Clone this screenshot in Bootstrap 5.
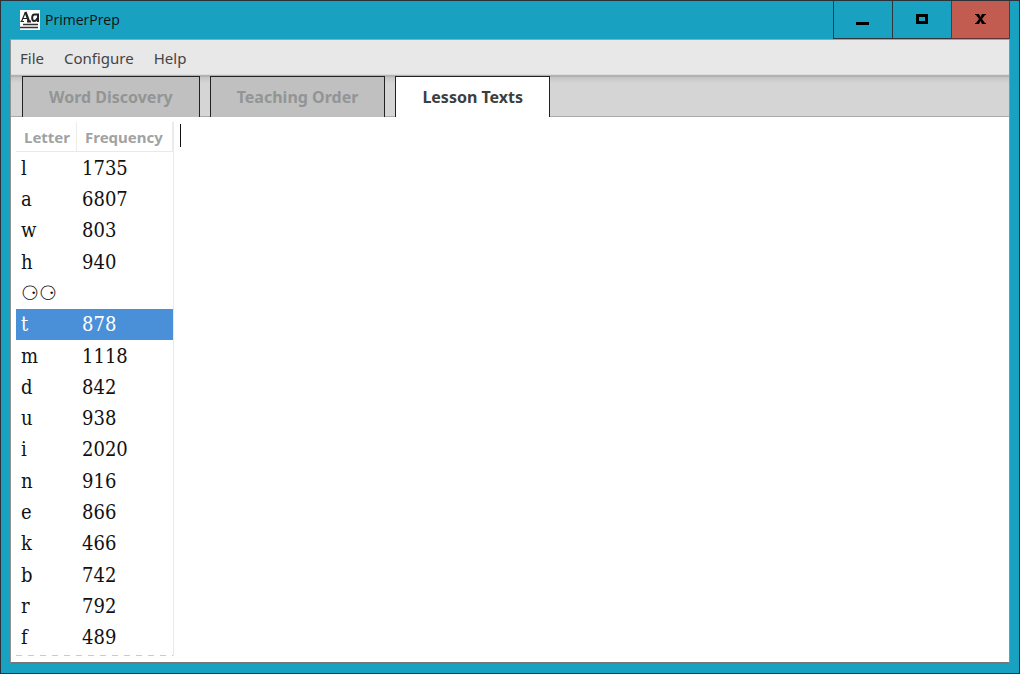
<!DOCTYPE html>
<html lang="en">
<head>
<meta charset="utf-8">
<meta name="viewport" content="width=device-width, initial-scale=1">
<title>PrimerPrep</title>
<link rel="stylesheet" href="https://cdn.jsdelivr.net/npm/bootstrap@5.3.0/dist/css/bootstrap.min.css">
<style>
  body { font-family: "Noto Sans", "Open Sans", sans-serif; font-size: 15px; line-height: 24px; background: #18a1c0; color: #444; }
  .app-window { border: 1px solid #2b3238; padding: 0 9px 9px; }
  .title-bar { height: 38px; color: #111; font-family: "Open Sans", sans-serif; padding-left: 10px; }
  .title-bar h1 { font-size: 14px; line-height: 20px; font-weight: 400; margin-left: 5px; }
  .win-btn { width: 59px; height: 38px; border: 0; border-left: 1px solid #30383d; border-bottom: 1px solid #30383d; background: transparent; }
  .win-close { background: #c25b50; border-color: #603338; border-right: 1px solid #603338; }
  .client { border: 1px solid #929292; border-top-color: #8aa9b8; border-bottom: 2px solid #777; background: #fff; }
  .menu-bar { background: #e8e8e8; height: 35px; padding: 1px 9px 0; gap: 20px; border-bottom: 1px solid #dcdcdc; }
  .menu-bar .nav-link { color: #444; padding: 0; font-size: 15px; }
  .tab-strip { --bs-nav-tabs-border-width: 0; height: 42px; padding: 1px 11px 0; gap: 10px; border-top: 2px solid #b2b2b2; border-bottom: 1px solid #aaa; background: linear-gradient(#c4c4c4, #d5d5d5 6px); }
  .tab-strip .nav-link { height: 41px; margin: -2px 0 -1px; padding: 0 26px; border: 1px solid #222; border-bottom: 0; border-radius: 0; background: #c0c0c0; color: #929595; font-weight: 700; font-size: 16px; }
  .tab-strip .nav-link.active { background: #fff; color: #3b3f42; border-color: #222; }
  .letters { width: 163px; padding: 5px 0 6px 5px; }
  .freq { width: 158px; height: 100%; padding-bottom: 3px; background: repeating-linear-gradient(90deg, #c8ccd0 0 6px, transparent 6px 12px) bottom / 100% 1px no-repeat; border-right: 1px solid #e9e9e9; border-collapse: separate; border-spacing: 0; color: #111; font-family: "DejaVu Serif Condensed", "DejaVu Serif", serif; font-size: 20px; line-height: 24px; table-layout: fixed; }
  .freq th { height: 30px; font: 700 15px/24px "Noto Sans", sans-serif; color: #a0a3a4; padding: 0 8px; border-bottom: 1px solid #e9e9e9; border-right: 1px solid #ececec; }
  .freq th:first-child { width: 61px; }
  .freq td { padding: 0 5px; }
  .freq tr.picked td { background: #4a90d9; color: #fff; }
  .editor { border: 0; padding: 5px 6px; outline: 0; resize: none; font-size: 18px; }
  .caret { left: 6px; top: 7px; width: 1px; height: 23px; background: #111; }
</style>
<script src="https://cdn.jsdelivr.net/npm/bootstrap@5.3.0/dist/js/bootstrap.bundle.min.js"></script>
</head>
<body>
<div class="app-window vh-100 d-flex flex-column">
  <header class="title-bar d-flex align-items-center">
    <svg width="20" height="20" viewBox="0 0 20 20" aria-hidden="true">
      <path fill="#fff" d="M0 0h20v20H0z"/>
      <path fill="none" stroke="#222" stroke-width="1.2" d="M1.500 11.500 5.500 2M3 8.500h5M.5 11.500h3.500"/>
      <path fill="none" stroke="#222" stroke-width="2.200" d="M5.500 2 9 11.500M7 11.500h4"/>
      <path fill="none" stroke="#222" stroke-width="2" d="M18 3.500V12M17.500 4.500h-3C11.500 4.500 11.500 11 14 11c2 0 3-1 3.500-3"/>
      <path fill="none" stroke="#333" stroke-width="1.500" d="M3 14.500h15M0 17.500h18"/>
    </svg>
    <h1 class="mb-0 me-auto">PrimerPrep</h1>
    <div class="d-flex">
      <button type="button" class="win-btn" aria-label="Minimize"><svg width="14" height="14" viewBox="0 0 14 14"><path d="M0 8h13v3H0z"/></svg></button>
      <button type="button" class="win-btn" aria-label="Maximize"><svg width="14" height="14" viewBox="0 0 14 14"><path fill-rule="evenodd" d="M1 0h12v10H1zM4 3v4h6V3z"/></svg></button>
      <button type="button" class="win-btn win-close" aria-label="Close"><svg width="14" height="14" viewBox="0 0 14 14"><path d="M1 0h4l1.500 3L8 0h4v1h-1L8 5l3 4h1v1H8L6.500 7 5 10H1V9h1l3-4-3-4H1z"/></svg></button>
    </div>
  </header>
  <div class="client flex-grow-1 d-flex flex-column">
    <nav class="menu-bar nav align-items-center">
      <a class="nav-link" href="#">File</a>
      <a class="nav-link" href="#">Configure</a>
      <a class="nav-link" href="#">Help</a>
    </nav>
    <div class="tab-strip nav nav-tabs" role="tablist">
      <button type="button" class="nav-link" role="tab">Word Discovery</button>
      <button type="button" class="nav-link" role="tab">Teaching Order</button>
      <button type="button" class="nav-link active" role="tab" aria-selected="true">Lesson Texts</button>
    </div>
    <main class="d-flex flex-grow-1">
      <div class="letters">
        <table class="freq">
          <thead><tr><th>Letter</th><th>Frequency</th></tr></thead>
          <tbody>
            <tr><td>l</td><td>1735</td></tr>
            <tr><td>a</td><td>6807</td></tr>
            <tr><td>w</td><td>803</td></tr>
            <tr><td>h</td><td>940</td></tr>
            <tr><td>⚆⚆</td><td></td></tr>
            <tr class="picked"><td>t</td><td>878</td></tr>
            <tr><td>m</td><td>1118</td></tr>
            <tr><td>d</td><td>842</td></tr>
            <tr><td>u</td><td>938</td></tr>
            <tr><td>i</td><td>2020</td></tr>
            <tr><td>n</td><td>916</td></tr>
            <tr><td>e</td><td>866</td></tr>
            <tr><td>k</td><td>466</td></tr>
            <tr><td>b</td><td>742</td></tr>
            <tr><td>r</td><td>792</td></tr>
            <tr><td>f</td><td>489</td></tr>
          </tbody>
        </table>
      </div>
      <div class="position-relative flex-grow-1 d-flex">
        <textarea class="editor flex-grow-1" aria-label="Lesson text"></textarea>
        <span class="caret position-absolute"></span>
      </div>
    </main>
  </div>
</div>
</body>
</html>
